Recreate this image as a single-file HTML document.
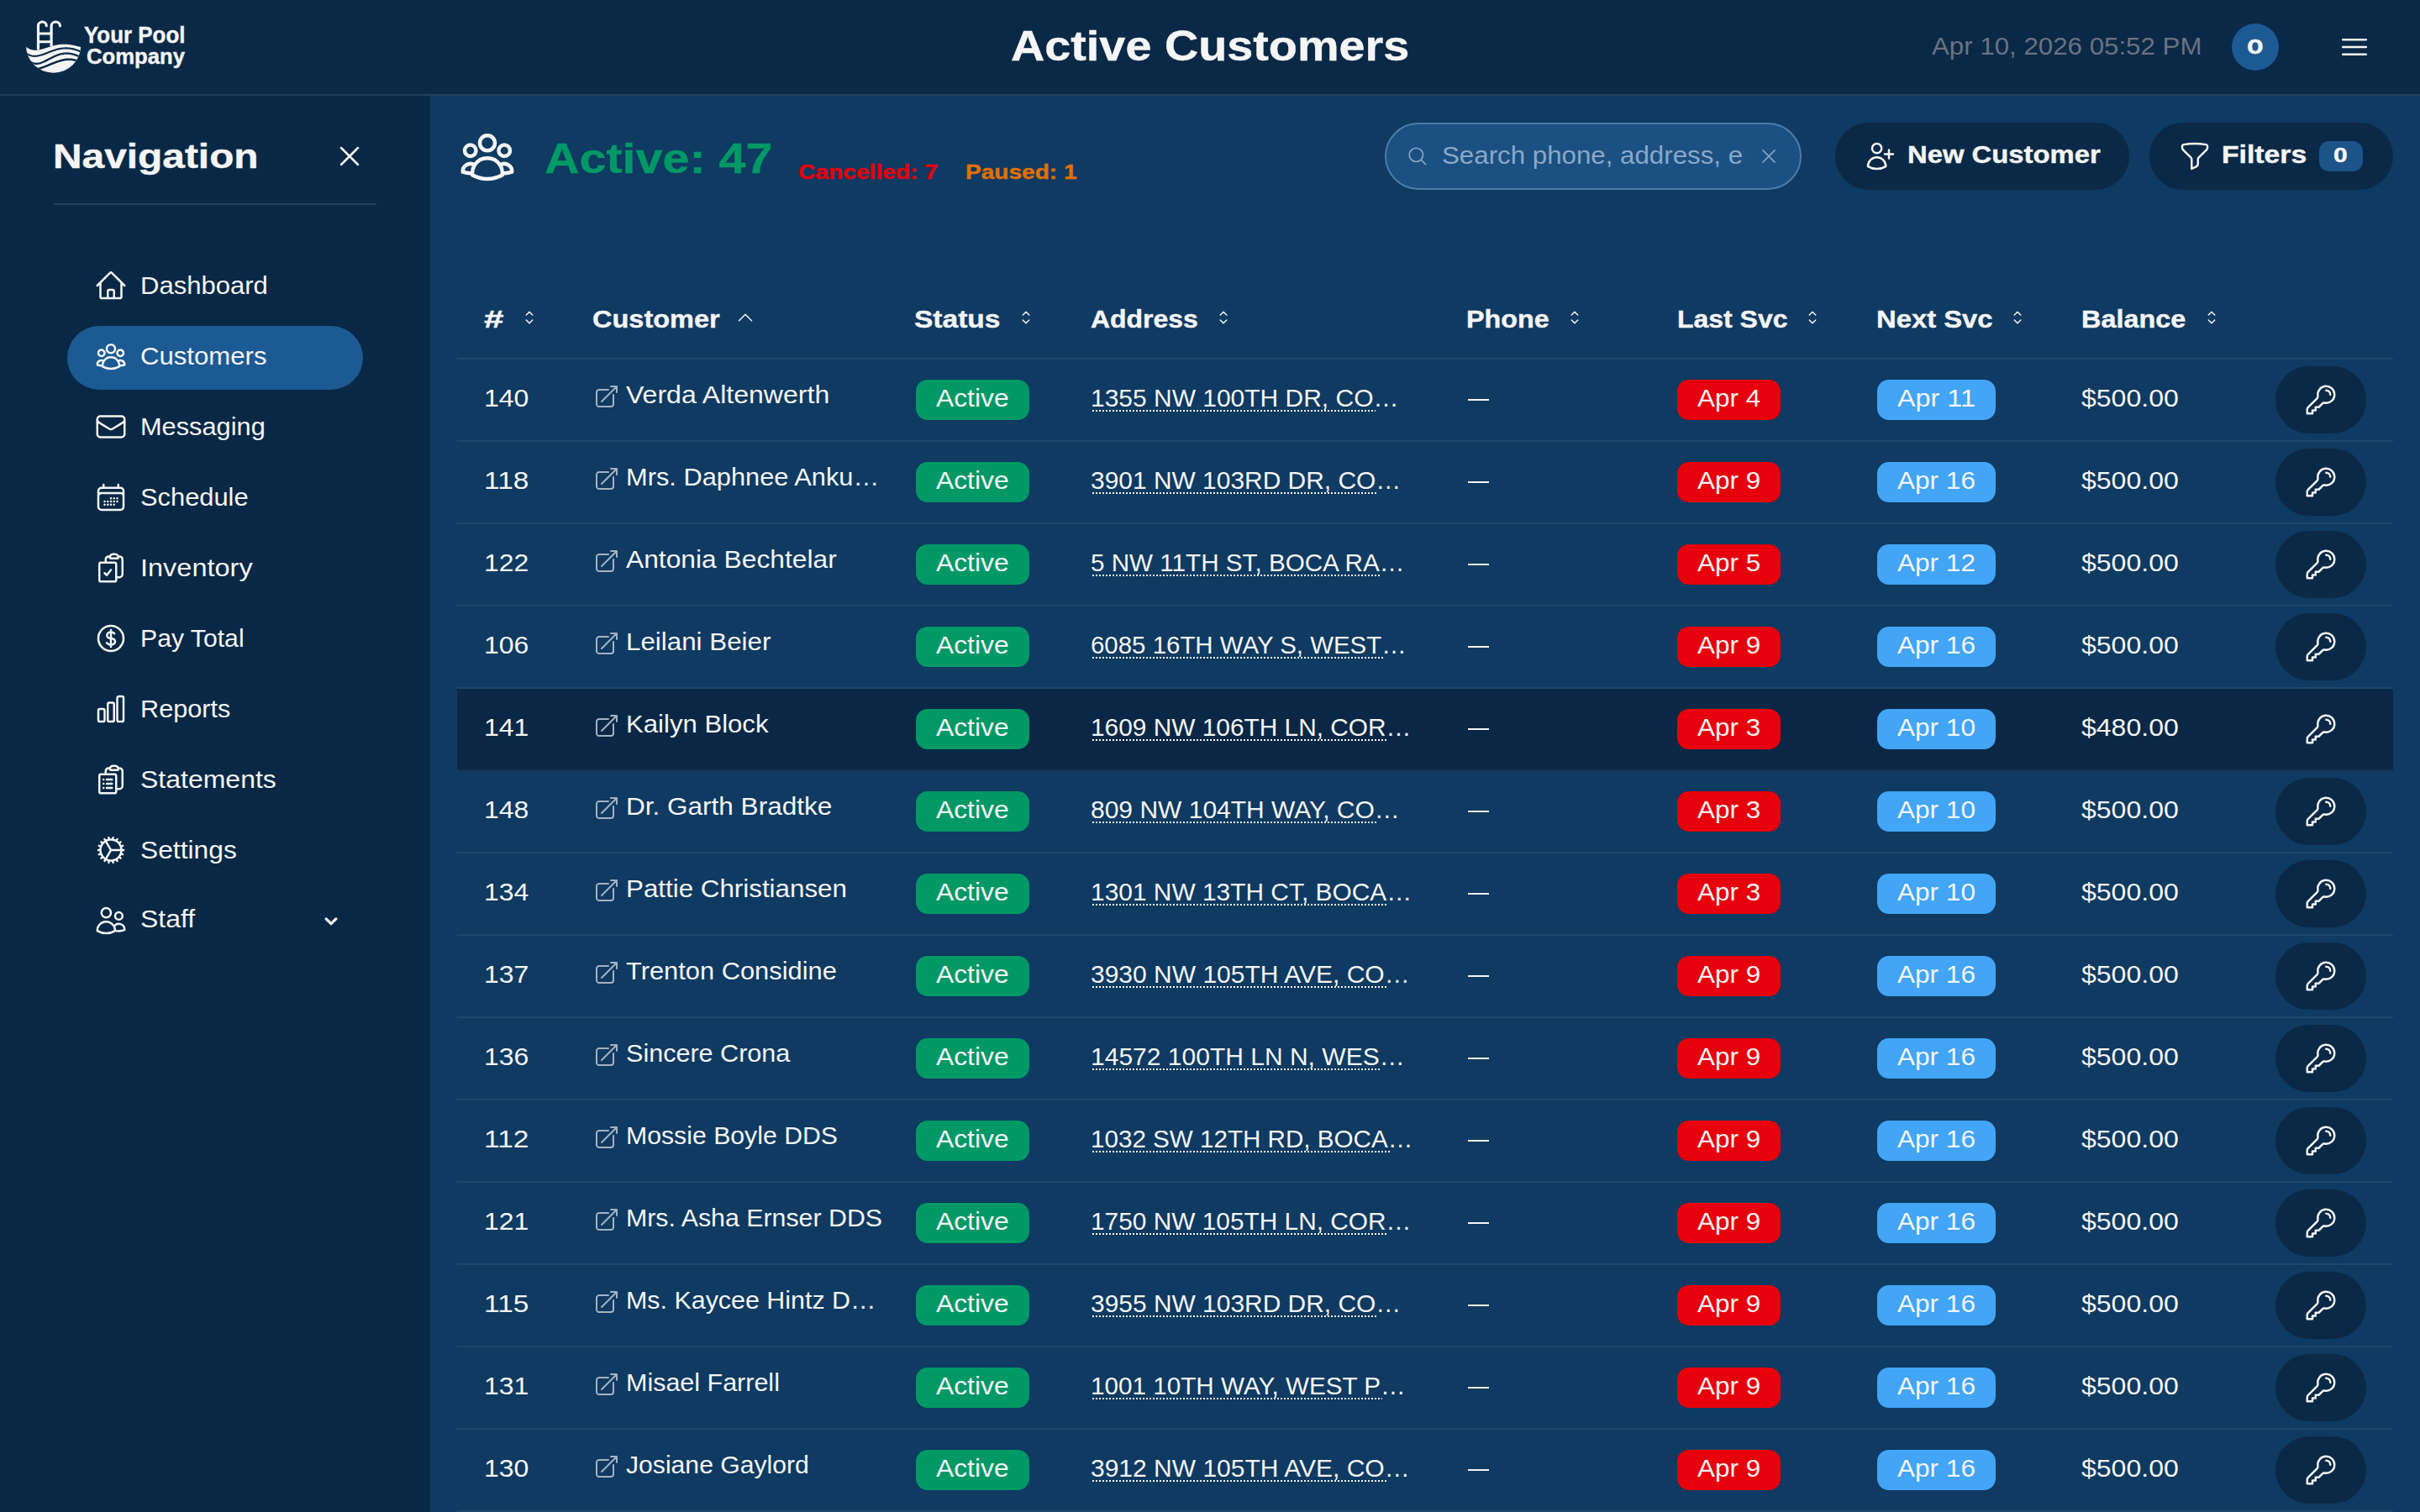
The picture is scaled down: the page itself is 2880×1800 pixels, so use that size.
<!DOCTYPE html><html><head><meta charset="utf-8"><title>Active Customers</title><style>
html,body{margin:0;padding:0;width:2880px;height:1800px;overflow:hidden;background:#0f3a61}
body{position:relative;font-family:"Liberation Sans",sans-serif}
.b{position:absolute}
.ic{position:absolute;overflow:visible}
.t{position:absolute;white-space:pre;line-height:0;height:0;transform-origin:0 0}
.dots{background:repeating-linear-gradient(90deg,#f5f5f5 0 2px,transparent 2px 4px)}
@media (max-width:2000px){html{zoom:0.5}}
</style></head><body><div class="b" style="left:0px;top:0px;width:2880px;height:112px;background:#0a2946;border-radius:0px;"></div>
<div class="b" style="left:0px;top:112px;width:2880px;height:2px;background:#233f58;border-radius:0px;"></div>
<div class="b" style="left:0px;top:114px;width:512px;height:1686px;background:#082845;border-radius:0px;"></div>
<div class="b" style="left:512px;top:114px;width:2368px;height:1686px;background:#0f3a61;border-radius:0px;"></div>
<svg class="ic" style="left:0;top:0;width:240px;height:112px" viewBox="0 0 240 112"><defs><clipPath id="lc"><circle cx="63.6" cy="54.2" r="32.6"/></clipPath></defs><g clip-path="url(#lc)"><path d="M26.0,50.10 L27.0,51.47 L28.0,52.71 L29.0,53.83 L30.0,54.83 L31.0,55.72 L32.0,56.50 L33.0,57.18 L34.0,57.77 L35.0,58.27 L36.0,58.69 L37.0,59.03 L38.0,59.29 L39.0,59.49 L40.0,59.63 L41.0,59.71 L42.0,59.73 L43.0,59.71 L44.0,59.64 L45.0,59.53 L46.0,59.38 L47.0,59.20 L48.0,58.99 L49.0,58.76 L50.0,58.51 L51.0,58.23 L52.0,57.94 L53.0,57.64 L54.0,57.34 L55.0,57.02 L56.0,56.70 L57.0,56.38 L58.0,56.07 L59.0,55.75 L60.0,55.45 L61.0,55.15 L62.0,54.86 L63.0,54.58 L64.0,54.32 L65.0,54.07 L66.0,53.84 L67.0,53.63 L68.0,53.43 L69.0,53.26 L70.0,53.10 L71.0,52.97 L72.0,52.86 L73.0,52.77 L74.0,52.71 L75.0,52.66 L76.0,52.65 L77.0,52.65 L78.0,52.68 L79.0,52.72 L80.0,52.79 L81.0,52.89 L82.0,53.00 L83.0,53.13 L84.0,53.28 L85.0,53.45 L86.0,53.63 L87.0,53.83 L88.0,54.05 L89.0,54.27 L90.0,54.50 L91.0,54.75 L92.0,54.99 L93.0,55.24 L94.0,55.49 L95.0,55.74 L96.0,55.99 L97.0,56.23 L98.0,56.46 L99.0,56.68 L100.0,56.88 L101.0,57.06 L102.0,57.22 L102,100 L26,100 Z" fill="#f5f5f5"/><polyline points="26.0,57.68 27.0,59.01 28.0,60.22 29.0,61.31 30.0,62.28 31.0,63.14 32.0,63.89 33.0,64.55 34.0,65.11 35.0,65.58 36.0,65.97 37.0,66.28 38.0,66.52 39.0,66.69 40.0,66.79 41.0,66.83 42.0,66.82 43.0,66.76 44.0,66.65 45.0,66.50 46.0,66.30 47.0,66.08 48.0,65.82 49.0,65.53 50.0,65.22 51.0,64.89 52.0,64.54 53.0,64.17 54.0,63.80 55.0,63.42 56.0,63.03 57.0,62.64 58.0,62.24 59.0,61.85 60.0,61.47 61.0,61.09 62.0,60.72 63.0,60.36 64.0,60.02 65.0,59.69 66.0,59.38 67.0,59.08 68.0,58.80 69.0,58.55 70.0,58.31 71.0,58.10 72.0,57.92 73.0,57.76 74.0,57.62 75.0,57.51 76.0,57.43 77.0,57.38 78.0,57.35 79.0,57.35 80.0,57.38 81.0,57.44 82.0,57.52 83.0,57.64 84.0,57.78 85.0,57.95 86.0,58.14 87.0,58.36 88.0,58.60 89.0,58.87 90.0,59.16 91.0,59.47 92.0,59.81 93.0,60.16 94.0,60.53 95.0,60.91 96.0,61.31 97.0,61.72 98.0,62.14 99.0,62.57 100.0,63.00 101.0,63.44 102.0,63.88" fill="none" stroke="#0a2946" stroke-width="2.1"/><polyline points="26.0,57.75 27.0,60.14 28.0,62.32 29.0,64.30 30.0,66.09 31.0,67.69 32.0,69.12 33.0,70.39 34.0,71.50 35.0,72.46 36.0,73.29 37.0,73.98 38.0,74.55 39.0,75.01 40.0,75.35 41.0,75.60 42.0,75.75 43.0,75.82 44.0,75.81 45.0,75.72 46.0,75.57 47.0,75.35 48.0,75.08 49.0,74.76 50.0,74.40 51.0,74.00 52.0,73.57 53.0,73.11 54.0,72.63 55.0,72.13 56.0,71.61 57.0,71.09 58.0,70.56 59.0,70.03 60.0,69.51 61.0,68.98 62.0,68.47 63.0,67.97 64.0,67.49 65.0,67.02 66.0,66.58 67.0,66.16 68.0,65.76 69.0,65.39 70.0,65.05 71.0,64.74 72.0,64.47 73.0,64.22 74.0,64.01 75.0,63.84 76.0,63.71 77.0,63.61 78.0,63.54 79.0,63.52 80.0,63.53 81.0,63.58 82.0,63.67 83.0,63.79 84.0,63.95 85.0,64.14 86.0,64.36 87.0,64.62 88.0,64.90 89.0,65.22 90.0,65.56 91.0,65.92 92.0,66.31 93.0,66.71 94.0,67.14 95.0,67.57 96.0,68.02 97.0,68.47 98.0,68.93 99.0,69.39 100.0,69.84 101.0,70.29 102.0,70.73" fill="none" stroke="#0a2946" stroke-width="2.3"/><polyline points="26.0,80.27 27.0,80.79 28.0,81.25 29.0,81.65 30.0,82.00 31.0,82.29 32.0,82.54 33.0,82.74 34.0,82.89 35.0,82.99 36.0,83.06 37.0,83.08 38.0,83.07 39.0,83.01 40.0,82.93 41.0,82.81 42.0,82.65 43.0,82.47 44.0,82.26 45.0,82.03 46.0,81.77 47.0,81.49 48.0,81.19 49.0,80.87 50.0,80.53 51.0,80.18 52.0,79.81 53.0,79.44 54.0,79.05 55.0,78.65 56.0,78.25 57.0,77.84 58.0,77.43 59.0,77.02 60.0,76.60 61.0,76.19 62.0,75.78 63.0,75.38 64.0,74.98 65.0,74.59 66.0,74.21 67.0,73.85 68.0,73.49 69.0,73.15 70.0,72.82 71.0,72.51 72.0,72.22 73.0,71.96 74.0,71.71 75.0,71.48 76.0,71.28 77.0,71.11 78.0,70.96 79.0,70.85 80.0,70.76 81.0,70.71 82.0,70.69 83.0,70.70 84.0,70.75 85.0,70.84 86.0,70.96 87.0,71.13 88.0,71.34 89.0,71.59 90.0,71.88 91.0,72.22 92.0,72.61 93.0,73.04 94.0,73.53 95.0,74.06 96.0,74.65 97.0,75.29 98.0,75.98 99.0,76.73 100.0,77.54 101.0,78.40 102.0,79.32" fill="none" stroke="#0a2946" stroke-width="2.5"/></g><g fill="none" stroke="#f5f5f5" stroke-width="3.2" stroke-linecap="round"><path d="M45.5,58 V31.2 A4.9,4.9 0 0 1 55.3,30.6" /><path d="M61.1,54 V31.5 A5.2,5.2 0 0 1 71.5,30.9" /></g><path d="M45.5,40 H61.1 M45.5,49.65 H61.1" stroke="#f5f5f5" stroke-width="3" fill="none"/></svg>
<div class="t" style="left:100.00px;top:42.26px;font-size:27.81px;font-weight:700;-webkit-text-stroke:0.4px;color:#f5f5f5;transform:scaleX(0.9322);">Your Pool</div>
<div class="t" style="left:103.00px;top:67.15px;font-size:25.23px;font-weight:700;-webkit-text-stroke:0.4px;color:#f5f5f5;transform:scaleX(1.0175);">Company</div>
<div class="t" style="left:1203.00px;top:54.76px;font-size:49.44px;font-weight:700;-webkit-text-stroke:0.4px;color:#f5f5f5;transform:scaleX(1.1282);">Active Customers</div>
<div class="t" style="left:2299.30px;top:54.50px;font-size:28.84px;color:#6a7282;transform:scaleX(1.0841);">Apr 10, 2026 05:52 PM</div>
<div class="b" style="left:2656px;top:28px;width:56px;height:56px;background:#1c5a93;border-radius:28px;"></div>
<div class="t" style="left:2673.69px;top:53.99px;font-size:30.90px;font-weight:700;-webkit-text-stroke:0.4px;color:#f5f5f5;transform:scaleX(1.0382);">o</div>
<svg class="ic" style="left:2782px;top:36px;width:40px;height:40px;color:#f5f5f5" viewBox="0 0 24 24" fill="none" stroke="currentColor" stroke-width="1.6" stroke-linecap="round" stroke-linejoin="round"><path d="M3.75 6.75h16.5M3.75 12h16.5m-16.5 5.25h16.5"/></svg>
<div class="t" style="left:63.00px;top:186.02px;font-size:41.20px;font-weight:700;-webkit-text-stroke:0.4px;color:#f5f5f5;transform:scaleX(1.1617);">Navigation</div>
<svg class="ic" style="left:396px;top:166px;width:40px;height:40px;color:#f5f5f5" viewBox="0 0 24 24" fill="none" stroke="currentColor" stroke-width="1.5" stroke-linecap="round" stroke-linejoin="round"><path d="M6 18 18 6M6 6l12 12"/></svg>
<div class="b" style="left:64px;top:242px;width:384px;height:2px;background:#1f3f5c;border-radius:0px;"></div>
<div class="b" style="left:80px;top:388px;width:352px;height:76px;background:#1c5a93;border-radius:38px;"></div>
<svg class="ic" style="left:112px;top:319.6px;width:40px;height:40px;color:#f5f5f5" viewBox="0 0 24 24" fill="none" stroke="currentColor" stroke-width="1.5" stroke-linecap="round" stroke-linejoin="round"><path d="m2.25 12 8.954-8.955c.44-.439 1.152-.439 1.591 0L21.75 12M4.5 9.75v10.125c0 .621.504 1.125 1.125 1.125H9.75v-4.875c0-.621.504-1.125 1.125-1.125h2.25c.621 0 1.125.504 1.125 1.125V21h4.125c.621 0 1.125-.504 1.125-1.125V9.75M8.25 21h8.25"/></svg>
<div class="t" style="left:167.00px;top:340.20px;font-size:28.84px;color:#f5f5f5;transform:scaleX(1.0767);">Dashboard</div>
<svg class="ic" style="left:112px;top:403.6px;width:40px;height:40px;color:#f5f5f5" viewBox="0 0 24 24" fill="none" stroke="currentColor" stroke-width="1.5" stroke-linecap="round" stroke-linejoin="round"><path d="M18 18.72a9.094 9.094 0 0 0 3.741-.479 3 3 0 0 0-4.682-2.72m.94 3.198.001.031c0 .225-.012.447-.037.666A11.944 11.944 0 0 1 12 21c-2.17 0-4.207-.576-5.963-1.584A6.062 6.062 0 0 1 6 18.719m12 0a5.971 5.971 0 0 0-.941-3.197m0 0A5.995 5.995 0 0 0 12 12.75a5.995 5.995 0 0 0-5.058 2.772m0 0a3 3 0 0 0-4.681 2.72 8.986 8.986 0 0 0 3.74.477m.94-3.197a5.971 5.971 0 0 0-.94 3.197M15 6.75a3 3 0 1 1-6 0 3 3 0 0 1 6 0Zm6 3a2.25 2.25 0 1 1-4.5 0 2.25 2.25 0 0 1 4.5 0Zm-13.5 0a2.25 2.25 0 1 1-4.5 0 2.25 2.25 0 0 1 4.5 0Z"/></svg>
<div class="t" style="left:167.00px;top:424.20px;font-size:28.84px;color:#f5f5f5;transform:scaleX(1.0801);">Customers</div>
<svg class="ic" style="left:112px;top:487.6px;width:40px;height:40px;color:#f5f5f5" viewBox="0 0 24 24" fill="none" stroke="currentColor" stroke-width="1.5" stroke-linecap="round" stroke-linejoin="round"><path d="M21.75 6.75v10.5a2.25 2.25 0 0 1-2.25 2.25h-15a2.25 2.25 0 0 1-2.25-2.25V6.75m19.5 0A2.25 2.25 0 0 0 19.5 4.5h-15a2.25 2.25 0 0 0-2.25 2.25m19.5 0v.243a2.25 2.25 0 0 1-1.07 1.916l-7.5 4.615a2.25 2.25 0 0 1-2.36 0L3.32 8.91a2.25 2.25 0 0 1-1.07-1.916V6.75"/></svg>
<div class="t" style="left:167.00px;top:508.20px;font-size:28.84px;color:#f5f5f5;transform:scaleX(1.0669);">Messaging</div>
<svg class="ic" style="left:112px;top:571.6px;width:40px;height:40px;color:#f5f5f5" viewBox="0 0 24 24" fill="none" stroke="currentColor" stroke-width="1.5" stroke-linecap="round" stroke-linejoin="round"><path d="M6.75 3v2.25M17.25 3v2.25M3 18.75V7.5a2.25 2.25 0 0 1 2.25-2.25h13.5A2.25 2.25 0 0 1 21 7.5v11.25m-18 0A2.25 2.25 0 0 0 5.25 21h13.5A2.25 2.25 0 0 0 21 18.75m-18 0v-7.5A2.25 2.25 0 0 1 5.25 9h13.5A2.25 2.25 0 0 1 21 11.25v7.5m-9-6h.008v.008H12v-.008ZM12 15h.008v.008H12V15Zm0 2.25h.008v.008H12v-.008ZM9.75 15h.008v.008H9.75V15Zm0 2.25h.008v.008H9.75v-.008ZM7.5 15h.008v.008H7.5V15Zm0 2.25h.008v.008H7.5v-.008Zm6.75-4.5h.008v.008h-.008v-.008Zm0 2.25h.008v.008h-.008V15Zm0 2.25h.008v.008h-.008v-.008Zm2.25-4.5h.008v.008H16.5v-.008Zm0 2.25h.008v.008H16.5V15Z"/></svg>
<div class="t" style="left:167.00px;top:592.20px;font-size:28.84px;color:#f5f5f5;transform:scaleX(1.0699);">Schedule</div>
<svg class="ic" style="left:112px;top:655.6px;width:40px;height:40px;color:#f5f5f5" viewBox="0 0 24 24" fill="none" stroke="currentColor" stroke-width="1.5" stroke-linecap="round" stroke-linejoin="round"><path d="M11.35 3.836c-.065.21-.1.433-.1.664 0 .414.336.75.75.75h4.5a.75.75 0 0 0 .75-.75 2.25 2.25 0 0 0-.1-.664m-5.8 0A2.251 2.251 0 0 1 13.5 2.25H15c1.012 0 1.867.668 2.15 1.586m-5.8 0c-.376.023-.75.05-1.124.08C9.095 4.01 8.25 4.973 8.25 6.108V8.25m8.9-4.414c.376.023.75.05 1.124.08 1.131.094 1.976 1.057 1.976 2.192V16.5A2.25 2.25 0 0 1 18 18.75h-2.25m-7.5-10.5H4.875c-.621 0-1.125.504-1.125 1.125v11.25c0 .621.504 1.125 1.125 1.125h9.75c.621 0 1.125-.504 1.125-1.125V18.75m-7.5-10.5h6.375c.621 0 1.125.504 1.125 1.125v9.375m-8.25-3 1.5 1.5 3-3.75"/></svg>
<div class="t" style="left:167.00px;top:676.20px;font-size:28.84px;color:#f5f5f5;transform:scaleX(1.1275);">Inventory</div>
<svg class="ic" style="left:112px;top:739.6px;width:40px;height:40px;color:#f5f5f5" viewBox="0 0 24 24" fill="none" stroke="currentColor" stroke-width="1.5" stroke-linecap="round" stroke-linejoin="round"><path d="M12 6v12m-3-2.818.879.659c1.171.879 3.07.879 4.242 0 1.172-.879 1.172-2.303 0-3.182C13.536 12.219 12.768 12 12 12c-.725 0-1.45-.22-2.003-.659-1.106-.879-1.106-2.303 0-3.182s2.9-.879 4.006 0l.415.33M21 12a9 9 0 1 1-18 0 9 9 0 0 1 18 0Z"/></svg>
<div class="t" style="left:167.00px;top:760.20px;font-size:28.84px;color:#f5f5f5;transform:scaleX(1.0469);">Pay Total</div>
<svg class="ic" style="left:112px;top:823.6px;width:40px;height:40px;color:#f5f5f5" viewBox="0 0 24 24" fill="none" stroke="currentColor" stroke-width="1.5" stroke-linecap="round" stroke-linejoin="round"><path d="M3 13.125C3 12.504 3.504 12 4.125 12h2.25c.621 0 1.125.504 1.125 1.125v6.75C7.5 20.496 6.996 21 6.375 21h-2.25A1.125 1.125 0 0 1 3 19.875v-6.75ZM9.75 8.625c0-.621.504-1.125 1.125-1.125h2.25c.621 0 1.125.504 1.125 1.125v11.25c0 .621-.504 1.125-1.125 1.125h-2.25a1.125 1.125 0 0 1-1.125-1.125V8.625ZM16.5 4.125c0-.621.504-1.125 1.125-1.125h2.25C20.496 3 21 3.504 21 4.125v15.75c0 .621-.504 1.125-1.125 1.125h-2.25a1.125 1.125 0 0 1-1.125-1.125V4.125Z"/></svg>
<div class="t" style="left:167.00px;top:844.20px;font-size:28.84px;color:#f5f5f5;transform:scaleX(1.0636);">Reports</div>
<svg class="ic" style="left:112px;top:907.6px;width:40px;height:40px;color:#f5f5f5" viewBox="0 0 24 24" fill="none" stroke="currentColor" stroke-width="1.5" stroke-linecap="round" stroke-linejoin="round"><path d="M9 12h3.75M9 15h3.75M9 18h3.75m3 .75H18a2.25 2.25 0 0 0 2.25-2.25V6.108c0-1.135-.845-2.098-1.976-2.192a48.424 48.424 0 0 0-1.123-.08m-5.801 0c-.065.21-.1.433-.1.664 0 .414.336.75.75.75h4.5a.75.75 0 0 0 .75-.75 2.25 2.25 0 0 0-.1-.664m-5.8 0A2.251 2.251 0 0 1 13.5 2.25H15c1.012 0 1.867.668 2.15 1.586m-5.8 0c-.376.023-.75.05-1.124.08C9.095 4.01 8.25 4.973 8.25 6.108V8.25m0 0H4.875c-.621 0-1.125.504-1.125 1.125v11.25c0 .621.504 1.125 1.125 1.125h9.75c.621 0 1.125-.504 1.125-1.125V9.375c0-.621-.504-1.125-1.125-1.125H8.25ZM6.75 12h.008v.008H6.75V12Zm0 3h.008v.008H6.75V15Zm0 3h.008v.008H6.75V18Z"/></svg>
<div class="t" style="left:167.00px;top:928.20px;font-size:28.84px;color:#f5f5f5;transform:scaleX(1.1100);">Statements</div>
<svg class="ic" style="left:112px;top:991.6px;width:40px;height:40px;color:#f5f5f5" viewBox="0 0 24 24" fill="none" stroke="currentColor" stroke-width="1.5" stroke-linecap="round" stroke-linejoin="round"><path d="M4.5 12a7.5 7.5 0 0 0 15 0m-15 0a7.5 7.5 0 1 1 15 0m-15 0H3m16.5 0H21m-1.5 0H12m-8.457 3.077 1.41-.513m14.095-5.13 1.41-.513M5.106 17.785l1.15-.964m11.49-9.642 1.149-.964M7.501 19.795l.75-1.3m7.5-12.99.75-1.3m-6.063 16.658.26-1.477m2.605-14.772.26-1.477m0 17.726-.26-1.477M10.698 4.614l-.26-1.477M16.5 19.794l-.75-1.299M7.5 4.205 12 12m6.894 5.785-1.149-.964M6.256 7.178l-1.15-.964m15.352 8.864-1.41-.513M4.954 9.435l-1.41-.514M12.002 12l-3.75 6.495"/></svg>
<div class="t" style="left:167.00px;top:1012.20px;font-size:28.84px;color:#f5f5f5;transform:scaleX(1.1021);">Settings</div>
<svg class="ic" style="left:112px;top:1075.9px;width:40px;height:40px;color:#f5f5f5" viewBox="0 0 24 24" fill="none" stroke="currentColor" stroke-width="1.5" stroke-linecap="round" stroke-linejoin="round"><path d="M15 19.128a9.38 9.38 0 0 0 2.625.372 9.337 9.337 0 0 0 4.121-.952 4.125 4.125 0 0 0-7.533-2.493M15 19.128v-.003c0-1.113-.285-2.16-.786-3.07M15 19.128v.106A12.318 12.318 0 0 1 8.624 21c-2.331 0-4.512-.645-6.374-1.766l-.001-.109a6.375 6.375 0 0 1 11.964-3.07M12 6.375a3.375 3.375 0 1 1-6.75 0 3.375 3.375 0 0 1 6.75 0Zm8.25 2.25a2.625 2.625 0 1 1-5.25 0 2.625 2.625 0 0 1 5.25 0Z"/></svg>
<div class="t" style="left:167.00px;top:1093.50px;font-size:28.84px;color:#f5f5f5;transform:scaleX(1.1088);">Staff</div>
<svg class="ic" style="left:383px;top:1085.6px;width:22px;height:22px;color:#f5f5f5" viewBox="0 0 24 24" fill="none" stroke="currentColor" stroke-width="3.6" stroke-linecap="round" stroke-linejoin="round"><path d="M5.6 8.6 12 14.9 18.4 8.6"/></svg>
<svg class="ic" style="left:544px;top:150px;width:72px;height:72px;color:#f5f5f5" viewBox="0 0 24 24" fill="none" stroke="currentColor" stroke-width="1.5" stroke-linecap="round" stroke-linejoin="round"><path d="M18 18.72a9.094 9.094 0 0 0 3.741-.479 3 3 0 0 0-4.682-2.72m.94 3.198.001.031c0 .225-.012.447-.037.666A11.944 11.944 0 0 1 12 21c-2.17 0-4.207-.576-5.963-1.584A6.062 6.062 0 0 1 6 18.719m12 0a5.971 5.971 0 0 0-.941-3.197m0 0A5.995 5.995 0 0 0 12 12.75a5.995 5.995 0 0 0-5.058 2.772m0 0a3 3 0 0 0-4.681 2.72 8.986 8.986 0 0 0 3.74.477m.94-3.197a5.971 5.971 0 0 0-.94 3.197M15 6.75a3 3 0 1 1-6 0 3 3 0 0 1 6 0Zm6 3a2.25 2.25 0 1 1-4.5 0 2.25 2.25 0 0 1 4.5 0Zm-13.5 0a2.25 2.25 0 1 1-4.5 0 2.25 2.25 0 0 1 4.5 0Z"/></svg>
<div class="t" style="left:648.30px;top:188.96px;font-size:49.44px;font-weight:700;-webkit-text-stroke:0.4px;color:#009966;transform:scaleX(1.1625);">Active: 47</div>
<div class="t" style="left:950.20px;top:205.23px;font-size:24.72px;font-weight:700;-webkit-text-stroke:0.4px;color:#e7000b;transform:scaleX(1.1396);">Cancelled: 7</div>
<div class="t" style="left:1149.20px;top:205.23px;font-size:24.72px;font-weight:700;-webkit-text-stroke:0.4px;color:#e17100;transform:scaleX(1.1356);">Paused: 1</div>
<div class="b" style="left:1648px;top:146px;width:496px;height:80px;background:#1b5082;border-radius:40px;box-sizing:border-box;border:2px solid #4f7ca6;"></div>
<svg class="ic" style="left:1674px;top:173px;width:26px;height:26px;color:#8ba8c6" viewBox="0 0 24 24" fill="none" stroke="currentColor" stroke-width="1.5" stroke-linecap="round" stroke-linejoin="round"><path d="m21 21-5.197-5.197m0 0A7.5 7.5 0 1 0 5.196 5.196a7.5 7.5 0 0 0 10.607 10.607Z"/></svg>
<div class="b" style="left:1712px;top:150px;width:364px;height:72px;overflow:hidden">
<div class="t" style="left:3.50px;top:34.70px;font-size:28.84px;color:#8ba8c6;transform:scaleX(1.0845);">Search phone, address, email</div>
</div>
<svg class="ic" style="left:2090.6px;top:172.4px;width:28px;height:28px;color:#8ba8c6" viewBox="0 0 24 24" fill="none" stroke="currentColor" stroke-width="1.5" stroke-linecap="round" stroke-linejoin="round"><path d="M6 18 18 6M6 6l12 12"/></svg>
<div class="b" style="left:2184px;top:146px;width:350px;height:80px;background:#0a2946;border-radius:40px;"></div>
<svg class="ic" style="left:2218px;top:166px;width:40px;height:40px;color:#f5f5f5" viewBox="0 0 24 24" fill="none" stroke="currentColor" stroke-width="1.5" stroke-linecap="round" stroke-linejoin="round"><path d="M18 7.5v3m0 0v3m0-3h3m-3 0h-3m-2.25-4.125a3.375 3.375 0 1 1-6.75 0 3.375 3.375 0 0 1 6.75 0ZM3 19.235v-.11a6.375 6.375 0 0 1 12.75 0v.109A12.318 12.318 0 0 1 9.374 21c-2.331 0-4.512-.645-6.374-1.766Z"/></svg>
<div class="t" style="left:2270.30px;top:184.40px;font-size:28.84px;font-weight:700;-webkit-text-stroke:0.4px;color:#f5f5f5;transform:scaleX(1.1380);">New Customer</div>
<div class="b" style="left:2558px;top:146px;width:290px;height:80px;background:#0a2946;border-radius:40px;"></div>
<svg class="ic" style="left:2592px;top:166px;width:40px;height:40px;color:#f5f5f5" viewBox="0 0 24 24" fill="none" stroke="currentColor" stroke-width="1.5" stroke-linecap="round" stroke-linejoin="round"><path d="M12 3c2.755 0 5.455.232 8.083.678.533.09.917.556.917 1.096v1.044a2.25 2.25 0 0 1-.659 1.591l-5.432 5.432a2.25 2.25 0 0 0-.659 1.591v2.927a2.25 2.25 0 0 1-1.244 2.013L9.75 21v-6.568a2.25 2.25 0 0 0-.659-1.591L3.659 7.409A2.25 2.25 0 0 1 3 5.818V4.774c0-.54.384-1.006.917-1.096A48.32 48.32 0 0 1 12 3Z"/></svg>
<div class="t" style="left:2644.00px;top:184.40px;font-size:28.84px;font-weight:700;-webkit-text-stroke:0.4px;color:#f5f5f5;transform:scaleX(1.1689);">Filters</div>
<div class="b" style="left:2760px;top:168px;width:52px;height:36px;background:#1c5488;border-radius:12px;"></div>
<div class="t" style="left:2776.90px;top:185.23px;font-size:24.72px;font-weight:700;-webkit-text-stroke:0.4px;color:#f5f5f5;transform:scaleX(1.2139);">0</div>
<div class="t" style="left:576.00px;top:379.50px;font-size:28.84px;font-weight:700;-webkit-text-stroke:0.4px;color:#f5f5f5;transform:scaleX(1.4626);">#</div>
<svg class="ic" style="left:617.5px;top:366px;width:24px;height:24px;color:#f5f5f5" viewBox="0 0 24 24" fill="none" stroke="currentColor" stroke-width="1.5" stroke-linecap="round" stroke-linejoin="round"><path d="M8.25 15 12 18.75 15.75 15m-7.5-6L12 5.25 15.75 9"/></svg>
<div class="t" style="left:705.00px;top:379.50px;font-size:28.84px;font-weight:700;-webkit-text-stroke:0.4px;color:#f5f5f5;transform:scaleX(1.1272);">Customer</div>
<svg class="ic" style="left:874.8px;top:366px;width:24px;height:24px;color:#f5f5f5" viewBox="0 0 24 24" fill="none" stroke="currentColor" stroke-width="1.5" stroke-linecap="round" stroke-linejoin="round"><path d="m4.5 15.75 7.5-7.5 7.5 7.5"/></svg>
<div class="t" style="left:1088.20px;top:379.50px;font-size:28.84px;font-weight:700;-webkit-text-stroke:0.4px;color:#f5f5f5;transform:scaleX(1.1621);">Status</div>
<svg class="ic" style="left:1208.6px;top:366px;width:24px;height:24px;color:#f5f5f5" viewBox="0 0 24 24" fill="none" stroke="currentColor" stroke-width="1.5" stroke-linecap="round" stroke-linejoin="round"><path d="M8.25 15 12 18.75 15.75 15m-7.5-6L12 5.25 15.75 9"/></svg>
<div class="t" style="left:1298.20px;top:379.50px;font-size:28.84px;font-weight:700;-webkit-text-stroke:0.4px;color:#f5f5f5;transform:scaleX(1.1082);">Address</div>
<svg class="ic" style="left:1444.1px;top:366px;width:24px;height:24px;color:#f5f5f5" viewBox="0 0 24 24" fill="none" stroke="currentColor" stroke-width="1.5" stroke-linecap="round" stroke-linejoin="round"><path d="M8.25 15 12 18.75 15.75 15m-7.5-6L12 5.25 15.75 9"/></svg>
<div class="t" style="left:1745.40px;top:379.50px;font-size:28.84px;font-weight:700;-webkit-text-stroke:0.4px;color:#f5f5f5;transform:scaleX(1.1191);">Phone</div>
<svg class="ic" style="left:1862.0px;top:366px;width:24px;height:24px;color:#f5f5f5" viewBox="0 0 24 24" fill="none" stroke="currentColor" stroke-width="1.5" stroke-linecap="round" stroke-linejoin="round"><path d="M8.25 15 12 18.75 15.75 15m-7.5-6L12 5.25 15.75 9"/></svg>
<div class="t" style="left:1995.80px;top:379.50px;font-size:28.84px;font-weight:700;-webkit-text-stroke:0.4px;color:#f5f5f5;transform:scaleX(1.1090);">Last Svc</div>
<svg class="ic" style="left:2145.4px;top:366px;width:24px;height:24px;color:#f5f5f5" viewBox="0 0 24 24" fill="none" stroke="currentColor" stroke-width="1.5" stroke-linecap="round" stroke-linejoin="round"><path d="M8.25 15 12 18.75 15.75 15m-7.5-6L12 5.25 15.75 9"/></svg>
<div class="t" style="left:2232.70px;top:379.50px;font-size:28.84px;font-weight:700;-webkit-text-stroke:0.4px;color:#f5f5f5;transform:scaleX(1.1378);">Next Svc</div>
<svg class="ic" style="left:2389.3px;top:366px;width:24px;height:24px;color:#f5f5f5" viewBox="0 0 24 24" fill="none" stroke="currentColor" stroke-width="1.5" stroke-linecap="round" stroke-linejoin="round"><path d="M8.25 15 12 18.75 15.75 15m-7.5-6L12 5.25 15.75 9"/></svg>
<div class="t" style="left:2477.30px;top:379.50px;font-size:28.84px;font-weight:700;-webkit-text-stroke:0.4px;color:#f5f5f5;transform:scaleX(1.1231);">Balance</div>
<svg class="ic" style="left:2619.6px;top:366px;width:24px;height:24px;color:#f5f5f5" viewBox="0 0 24 24" fill="none" stroke="currentColor" stroke-width="1.5" stroke-linecap="round" stroke-linejoin="round"><path d="M8.25 15 12 18.75 15.75 15m-7.5-6L12 5.25 15.75 9"/></svg>
<div class="b" style="left:544px;top:426px;width:2304px;height:2px;background:#1c486c;border-radius:0px;"></div>
<div class="b" style="left:544px;top:524px;width:2304px;height:2px;background:#1c486c;border-radius:0px;"></div>
<div class="t" style="left:576.00px;top:473.90px;font-size:28.84px;color:#f5f5f5;transform:scaleX(1.1108);">140</div>
<svg class="ic" style="left:706px;top:456px;width:32px;height:32px;color:#a3b3c3" viewBox="0 0 24 24" fill="none" stroke="currentColor" stroke-width="1.5" stroke-linecap="round" stroke-linejoin="round"><path d="M13.5 6H5.25A2.25 2.25 0 0 0 3 8.25v10.5A2.25 2.25 0 0 0 5.25 21h10.5A2.25 2.25 0 0 0 18 18.75V10.5m-10.5 6L21 3m0 0h-5.25M21 3v5.25"/></svg>
<div class="t" style="left:745.00px;top:469.90px;font-size:28.84px;color:#f5f5f5;transform:scaleX(1.1112);">Verda Altenwerth</div>
<div class="b" style="left:1090.0px;top:452px;width:134.6px;height:48px;background:#009966;border-radius:14px"></div>
<div class="t" style="left:1114.00px;top:473.90px;font-size:28.84px;color:#f5f5f5;transform:scaleX(1.1030);">Active</div>
<div class="b dots" style="left:1300px;top:488px;width:336.6px;height:2px"></div>
<div class="t" style="left:1297.50px;top:473.90px;font-size:28.84px;color:#f5f5f5;transform:scaleX(1.0397);">1355 NW 100TH DR, CO…</div>
<div class="b" style="left:1746.5px;top:474.6px;width:25.6px;height:2.6px;background:#f5f5f5;border-radius:0px;"></div>
<div class="b" style="left:1996.0px;top:452px;width:123.2px;height:48px;background:#e7000b;border-radius:14px"></div>
<div class="t" style="left:2020.00px;top:473.90px;font-size:28.84px;color:#f5f5f5;transform:scaleX(1.0901);">Apr 4</div>
<div class="b" style="left:2234.0px;top:452px;width:141.0px;height:48px;background:#42a5f5;border-radius:14px"></div>
<div class="t" style="left:2258.00px;top:473.90px;font-size:28.84px;color:#f5f5f5;transform:scaleX(1.1223);">Apr 11</div>
<div class="t" style="left:2477.00px;top:473.90px;font-size:28.84px;color:#f5f5f5;transform:scaleX(1.1107);">$500.00</div>
<div class="b" style="left:2708px;top:436px;width:108px;height:80px;background:#0a2946;border-radius:40px;"></div>
<svg class="ic" style="left:2742px;top:456px;width:40px;height:40px;color:#f5f5f5" viewBox="0 0 24 24" fill="none" stroke="currentColor" stroke-width="1.5" stroke-linecap="round" stroke-linejoin="round"><path d="M15.75 5.25a3 3 0 0 1 3 3m3 0a6 6 0 0 1-7.029 5.912c-.563-.097-1.159.026-1.563.43L10.5 17.25H8.25v2.25H6v2.25H2.25v-2.818c0-.597.237-1.17.659-1.591l6.499-6.499c.404-.404.527-1 .43-1.563A6 6 0 1 1 21.75 8.25Z"/></svg>
<div class="b" style="left:544px;top:622px;width:2304px;height:2px;background:#1c486c;border-radius:0px;"></div>
<div class="t" style="left:576.00px;top:571.90px;font-size:28.84px;color:#f5f5f5;transform:scaleX(1.1625);">118</div>
<svg class="ic" style="left:706px;top:554px;width:32px;height:32px;color:#a3b3c3" viewBox="0 0 24 24" fill="none" stroke="currentColor" stroke-width="1.5" stroke-linecap="round" stroke-linejoin="round"><path d="M13.5 6H5.25A2.25 2.25 0 0 0 3 8.25v10.5A2.25 2.25 0 0 0 5.25 21h10.5A2.25 2.25 0 0 0 18 18.75V10.5m-10.5 6L21 3m0 0h-5.25M21 3v5.25"/></svg>
<div class="t" style="left:745.00px;top:567.90px;font-size:28.84px;color:#f5f5f5;transform:scaleX(1.0683);">Mrs. Daphnee Anku…</div>
<div class="b" style="left:1090.0px;top:550px;width:134.6px;height:48px;background:#009966;border-radius:14px"></div>
<div class="t" style="left:1114.00px;top:571.90px;font-size:28.84px;color:#f5f5f5;transform:scaleX(1.1030);">Active</div>
<div class="b dots" style="left:1300px;top:586px;width:339.5px;height:2px"></div>
<div class="t" style="left:1297.50px;top:571.90px;font-size:28.84px;color:#f5f5f5;transform:scaleX(1.0384);">3901 NW 103RD DR, CO…</div>
<div class="b" style="left:1746.5px;top:572.6px;width:25.6px;height:2.6px;background:#f5f5f5;border-radius:0px;"></div>
<div class="b" style="left:1996.0px;top:550px;width:123.2px;height:48px;background:#e7000b;border-radius:14px"></div>
<div class="t" style="left:2020.00px;top:571.90px;font-size:28.84px;color:#f5f5f5;transform:scaleX(1.0901);">Apr 9</div>
<div class="b" style="left:2234.0px;top:550px;width:141.0px;height:48px;background:#42a5f5;border-radius:14px"></div>
<div class="t" style="left:2258.00px;top:571.90px;font-size:28.84px;color:#f5f5f5;transform:scaleX(1.0941);">Apr 16</div>
<div class="t" style="left:2477.00px;top:571.90px;font-size:28.84px;color:#f5f5f5;transform:scaleX(1.1107);">$500.00</div>
<div class="b" style="left:2708px;top:534px;width:108px;height:80px;background:#0a2946;border-radius:40px;"></div>
<svg class="ic" style="left:2742px;top:554px;width:40px;height:40px;color:#f5f5f5" viewBox="0 0 24 24" fill="none" stroke="currentColor" stroke-width="1.5" stroke-linecap="round" stroke-linejoin="round"><path d="M15.75 5.25a3 3 0 0 1 3 3m3 0a6 6 0 0 1-7.029 5.912c-.563-.097-1.159.026-1.563.43L10.5 17.25H8.25v2.25H6v2.25H2.25v-2.818c0-.597.237-1.17.659-1.591l6.499-6.499c.404-.404.527-1 .43-1.563A6 6 0 1 1 21.75 8.25Z"/></svg>
<div class="b" style="left:544px;top:720px;width:2304px;height:2px;background:#1c486c;border-radius:0px;"></div>
<div class="t" style="left:576.00px;top:669.90px;font-size:28.84px;color:#f5f5f5;transform:scaleX(1.1108);">122</div>
<svg class="ic" style="left:706px;top:652px;width:32px;height:32px;color:#a3b3c3" viewBox="0 0 24 24" fill="none" stroke="currentColor" stroke-width="1.5" stroke-linecap="round" stroke-linejoin="round"><path d="M13.5 6H5.25A2.25 2.25 0 0 0 3 8.25v10.5A2.25 2.25 0 0 0 5.25 21h10.5A2.25 2.25 0 0 0 18 18.75V10.5m-10.5 6L21 3m0 0h-5.25M21 3v5.25"/></svg>
<div class="t" style="left:745.00px;top:665.90px;font-size:28.84px;color:#f5f5f5;transform:scaleX(1.1017);">Antonia Bechtelar</div>
<div class="b" style="left:1090.0px;top:648px;width:134.6px;height:48px;background:#009966;border-radius:14px"></div>
<div class="t" style="left:1114.00px;top:669.90px;font-size:28.84px;color:#f5f5f5;transform:scaleX(1.1030);">Active</div>
<div class="b dots" style="left:1300px;top:684px;width:343.5px;height:2px"></div>
<div class="t" style="left:1297.50px;top:669.90px;font-size:28.84px;color:#f5f5f5;transform:scaleX(1.0281);">5 NW 11TH ST, BOCA RA…</div>
<div class="b" style="left:1746.5px;top:670.6px;width:25.6px;height:2.6px;background:#f5f5f5;border-radius:0px;"></div>
<div class="b" style="left:1996.0px;top:648px;width:123.2px;height:48px;background:#e7000b;border-radius:14px"></div>
<div class="t" style="left:2020.00px;top:669.90px;font-size:28.84px;color:#f5f5f5;transform:scaleX(1.0901);">Apr 5</div>
<div class="b" style="left:2234.0px;top:648px;width:141.0px;height:48px;background:#42a5f5;border-radius:14px"></div>
<div class="t" style="left:2258.00px;top:669.90px;font-size:28.84px;color:#f5f5f5;transform:scaleX(1.0941);">Apr 12</div>
<div class="t" style="left:2477.00px;top:669.90px;font-size:28.84px;color:#f5f5f5;transform:scaleX(1.1107);">$500.00</div>
<div class="b" style="left:2708px;top:632px;width:108px;height:80px;background:#0a2946;border-radius:40px;"></div>
<svg class="ic" style="left:2742px;top:652px;width:40px;height:40px;color:#f5f5f5" viewBox="0 0 24 24" fill="none" stroke="currentColor" stroke-width="1.5" stroke-linecap="round" stroke-linejoin="round"><path d="M15.75 5.25a3 3 0 0 1 3 3m3 0a6 6 0 0 1-7.029 5.912c-.563-.097-1.159.026-1.563.43L10.5 17.25H8.25v2.25H6v2.25H2.25v-2.818c0-.597.237-1.17.659-1.591l6.499-6.499c.404-.404.527-1 .43-1.563A6 6 0 1 1 21.75 8.25Z"/></svg>
<div class="b" style="left:544px;top:818px;width:2304px;height:2px;background:#1c486c;border-radius:0px;"></div>
<div class="t" style="left:576.00px;top:767.90px;font-size:28.84px;color:#f5f5f5;transform:scaleX(1.1108);">106</div>
<svg class="ic" style="left:706px;top:750px;width:32px;height:32px;color:#a3b3c3" viewBox="0 0 24 24" fill="none" stroke="currentColor" stroke-width="1.5" stroke-linecap="round" stroke-linejoin="round"><path d="M13.5 6H5.25A2.25 2.25 0 0 0 3 8.25v10.5A2.25 2.25 0 0 0 5.25 21h10.5A2.25 2.25 0 0 0 18 18.75V10.5m-10.5 6L21 3m0 0h-5.25M21 3v5.25"/></svg>
<div class="t" style="left:745.00px;top:763.90px;font-size:28.84px;color:#f5f5f5;transform:scaleX(1.0863);">Leilani Beier</div>
<div class="b" style="left:1090.0px;top:746px;width:134.6px;height:48px;background:#009966;border-radius:14px"></div>
<div class="t" style="left:1114.00px;top:767.90px;font-size:28.84px;color:#f5f5f5;transform:scaleX(1.1030);">Active</div>
<div class="b dots" style="left:1300px;top:782px;width:345.8px;height:2px"></div>
<div class="t" style="left:1297.50px;top:767.90px;font-size:28.84px;color:#f5f5f5;transform:scaleX(1.0210);">6085 16TH WAY S, WEST…</div>
<div class="b" style="left:1746.5px;top:768.6px;width:25.6px;height:2.6px;background:#f5f5f5;border-radius:0px;"></div>
<div class="b" style="left:1996.0px;top:746px;width:123.2px;height:48px;background:#e7000b;border-radius:14px"></div>
<div class="t" style="left:2020.00px;top:767.90px;font-size:28.84px;color:#f5f5f5;transform:scaleX(1.0901);">Apr 9</div>
<div class="b" style="left:2234.0px;top:746px;width:141.0px;height:48px;background:#42a5f5;border-radius:14px"></div>
<div class="t" style="left:2258.00px;top:767.90px;font-size:28.84px;color:#f5f5f5;transform:scaleX(1.0941);">Apr 16</div>
<div class="t" style="left:2477.00px;top:767.90px;font-size:28.84px;color:#f5f5f5;transform:scaleX(1.1107);">$500.00</div>
<div class="b" style="left:2708px;top:730px;width:108px;height:80px;background:#0a2946;border-radius:40px;"></div>
<svg class="ic" style="left:2742px;top:750px;width:40px;height:40px;color:#f5f5f5" viewBox="0 0 24 24" fill="none" stroke="currentColor" stroke-width="1.5" stroke-linecap="round" stroke-linejoin="round"><path d="M15.75 5.25a3 3 0 0 1 3 3m3 0a6 6 0 0 1-7.029 5.912c-.563-.097-1.159.026-1.563.43L10.5 17.25H8.25v2.25H6v2.25H2.25v-2.818c0-.597.237-1.17.659-1.591l6.499-6.499c.404-.404.527-1 .43-1.563A6 6 0 1 1 21.75 8.25Z"/></svg>
<div class="b" style="left:544px;top:820px;width:2304px;height:96px;background:#0a2846;border-radius:0px;"></div>
<div class="b" style="left:544px;top:916px;width:2304px;height:2px;background:#183350;border-radius:0px;"></div>
<div class="t" style="left:576.00px;top:865.90px;font-size:28.84px;color:#f5f5f5;transform:scaleX(1.1108);">141</div>
<svg class="ic" style="left:706px;top:848px;width:32px;height:32px;color:#a3b3c3" viewBox="0 0 24 24" fill="none" stroke="currentColor" stroke-width="1.5" stroke-linecap="round" stroke-linejoin="round"><path d="M13.5 6H5.25A2.25 2.25 0 0 0 3 8.25v10.5A2.25 2.25 0 0 0 5.25 21h10.5A2.25 2.25 0 0 0 18 18.75V10.5m-10.5 6L21 3m0 0h-5.25M21 3v5.25"/></svg>
<div class="t" style="left:745.00px;top:861.90px;font-size:28.84px;color:#f5f5f5;transform:scaleX(1.0792);">Kailyn Block</div>
<div class="b" style="left:1090.0px;top:844px;width:134.6px;height:48px;background:#009966;border-radius:14px"></div>
<div class="t" style="left:1114.00px;top:865.90px;font-size:28.84px;color:#f5f5f5;transform:scaleX(1.1030);">Active</div>
<div class="b dots" style="left:1300px;top:880px;width:351.6px;height:2px"></div>
<div class="t" style="left:1297.50px;top:865.90px;font-size:28.84px;color:#f5f5f5;transform:scaleX(1.0352);">1609 NW 106TH LN, COR…</div>
<div class="b" style="left:1746.5px;top:866.6px;width:25.6px;height:2.6px;background:#f5f5f5;border-radius:0px;"></div>
<div class="b" style="left:1996.0px;top:844px;width:123.2px;height:48px;background:#e7000b;border-radius:14px"></div>
<div class="t" style="left:2020.00px;top:865.90px;font-size:28.84px;color:#f5f5f5;transform:scaleX(1.0901);">Apr 3</div>
<div class="b" style="left:2234.0px;top:844px;width:141.0px;height:48px;background:#42a5f5;border-radius:14px"></div>
<div class="t" style="left:2258.00px;top:865.90px;font-size:28.84px;color:#f5f5f5;transform:scaleX(1.0941);">Apr 10</div>
<div class="t" style="left:2477.00px;top:865.90px;font-size:28.84px;color:#f5f5f5;transform:scaleX(1.1107);">$480.00</div>
<svg class="ic" style="left:2742px;top:848px;width:40px;height:40px;color:#f5f5f5" viewBox="0 0 24 24" fill="none" stroke="currentColor" stroke-width="1.5" stroke-linecap="round" stroke-linejoin="round"><path d="M15.75 5.25a3 3 0 0 1 3 3m3 0a6 6 0 0 1-7.029 5.912c-.563-.097-1.159.026-1.563.43L10.5 17.25H8.25v2.25H6v2.25H2.25v-2.818c0-.597.237-1.17.659-1.591l6.499-6.499c.404-.404.527-1 .43-1.563A6 6 0 1 1 21.75 8.25Z"/></svg>
<div class="b" style="left:544px;top:1014px;width:2304px;height:2px;background:#1c486c;border-radius:0px;"></div>
<div class="t" style="left:576.00px;top:963.90px;font-size:28.84px;color:#f5f5f5;transform:scaleX(1.1108);">148</div>
<svg class="ic" style="left:706px;top:946px;width:32px;height:32px;color:#a3b3c3" viewBox="0 0 24 24" fill="none" stroke="currentColor" stroke-width="1.5" stroke-linecap="round" stroke-linejoin="round"><path d="M13.5 6H5.25A2.25 2.25 0 0 0 3 8.25v10.5A2.25 2.25 0 0 0 5.25 21h10.5A2.25 2.25 0 0 0 18 18.75V10.5m-10.5 6L21 3m0 0h-5.25M21 3v5.25"/></svg>
<div class="t" style="left:745.00px;top:959.90px;font-size:28.84px;color:#f5f5f5;transform:scaleX(1.0934);">Dr. Garth Bradtke</div>
<div class="b" style="left:1090.0px;top:942px;width:134.6px;height:48px;background:#009966;border-radius:14px"></div>
<div class="t" style="left:1114.00px;top:963.90px;font-size:28.84px;color:#f5f5f5;transform:scaleX(1.1030);">Active</div>
<div class="b dots" style="left:1300px;top:978px;width:338.0px;height:2px"></div>
<div class="t" style="left:1297.50px;top:963.90px;font-size:28.84px;color:#f5f5f5;transform:scaleX(1.0406);">809 NW 104TH WAY, CO…</div>
<div class="b" style="left:1746.5px;top:964.6px;width:25.6px;height:2.6px;background:#f5f5f5;border-radius:0px;"></div>
<div class="b" style="left:1996.0px;top:942px;width:123.2px;height:48px;background:#e7000b;border-radius:14px"></div>
<div class="t" style="left:2020.00px;top:963.90px;font-size:28.84px;color:#f5f5f5;transform:scaleX(1.0901);">Apr 3</div>
<div class="b" style="left:2234.0px;top:942px;width:141.0px;height:48px;background:#42a5f5;border-radius:14px"></div>
<div class="t" style="left:2258.00px;top:963.90px;font-size:28.84px;color:#f5f5f5;transform:scaleX(1.0941);">Apr 10</div>
<div class="t" style="left:2477.00px;top:963.90px;font-size:28.84px;color:#f5f5f5;transform:scaleX(1.1107);">$500.00</div>
<div class="b" style="left:2708px;top:926px;width:108px;height:80px;background:#0a2946;border-radius:40px;"></div>
<svg class="ic" style="left:2742px;top:946px;width:40px;height:40px;color:#f5f5f5" viewBox="0 0 24 24" fill="none" stroke="currentColor" stroke-width="1.5" stroke-linecap="round" stroke-linejoin="round"><path d="M15.75 5.25a3 3 0 0 1 3 3m3 0a6 6 0 0 1-7.029 5.912c-.563-.097-1.159.026-1.563.43L10.5 17.25H8.25v2.25H6v2.25H2.25v-2.818c0-.597.237-1.17.659-1.591l6.499-6.499c.404-.404.527-1 .43-1.563A6 6 0 1 1 21.75 8.25Z"/></svg>
<div class="b" style="left:544px;top:1112px;width:2304px;height:2px;background:#1c486c;border-radius:0px;"></div>
<div class="t" style="left:576.00px;top:1061.90px;font-size:28.84px;color:#f5f5f5;transform:scaleX(1.1108);">134</div>
<svg class="ic" style="left:706px;top:1044px;width:32px;height:32px;color:#a3b3c3" viewBox="0 0 24 24" fill="none" stroke="currentColor" stroke-width="1.5" stroke-linecap="round" stroke-linejoin="round"><path d="M13.5 6H5.25A2.25 2.25 0 0 0 3 8.25v10.5A2.25 2.25 0 0 0 5.25 21h10.5A2.25 2.25 0 0 0 18 18.75V10.5m-10.5 6L21 3m0 0h-5.25M21 3v5.25"/></svg>
<div class="t" style="left:745.00px;top:1057.90px;font-size:28.84px;color:#f5f5f5;transform:scaleX(1.0867);">Pattie Christiansen</div>
<div class="b" style="left:1090.0px;top:1040px;width:134.6px;height:48px;background:#009966;border-radius:14px"></div>
<div class="t" style="left:1114.00px;top:1061.90px;font-size:28.84px;color:#f5f5f5;transform:scaleX(1.1030);">Active</div>
<div class="b dots" style="left:1300px;top:1076px;width:352.3px;height:2px"></div>
<div class="t" style="left:1297.50px;top:1061.90px;font-size:28.84px;color:#f5f5f5;transform:scaleX(1.0371);">1301 NW 13TH CT, BOCA…</div>
<div class="b" style="left:1746.5px;top:1062.6px;width:25.6px;height:2.6px;background:#f5f5f5;border-radius:0px;"></div>
<div class="b" style="left:1996.0px;top:1040px;width:123.2px;height:48px;background:#e7000b;border-radius:14px"></div>
<div class="t" style="left:2020.00px;top:1061.90px;font-size:28.84px;color:#f5f5f5;transform:scaleX(1.0901);">Apr 3</div>
<div class="b" style="left:2234.0px;top:1040px;width:141.0px;height:48px;background:#42a5f5;border-radius:14px"></div>
<div class="t" style="left:2258.00px;top:1061.90px;font-size:28.84px;color:#f5f5f5;transform:scaleX(1.0941);">Apr 10</div>
<div class="t" style="left:2477.00px;top:1061.90px;font-size:28.84px;color:#f5f5f5;transform:scaleX(1.1107);">$500.00</div>
<div class="b" style="left:2708px;top:1024px;width:108px;height:80px;background:#0a2946;border-radius:40px;"></div>
<svg class="ic" style="left:2742px;top:1044px;width:40px;height:40px;color:#f5f5f5" viewBox="0 0 24 24" fill="none" stroke="currentColor" stroke-width="1.5" stroke-linecap="round" stroke-linejoin="round"><path d="M15.75 5.25a3 3 0 0 1 3 3m3 0a6 6 0 0 1-7.029 5.912c-.563-.097-1.159.026-1.563.43L10.5 17.25H8.25v2.25H6v2.25H2.25v-2.818c0-.597.237-1.17.659-1.591l6.499-6.499c.404-.404.527-1 .43-1.563A6 6 0 1 1 21.75 8.25Z"/></svg>
<div class="b" style="left:544px;top:1210px;width:2304px;height:2px;background:#1c486c;border-radius:0px;"></div>
<div class="t" style="left:576.00px;top:1159.90px;font-size:28.84px;color:#f5f5f5;transform:scaleX(1.1108);">137</div>
<svg class="ic" style="left:706px;top:1142px;width:32px;height:32px;color:#a3b3c3" viewBox="0 0 24 24" fill="none" stroke="currentColor" stroke-width="1.5" stroke-linecap="round" stroke-linejoin="round"><path d="M13.5 6H5.25A2.25 2.25 0 0 0 3 8.25v10.5A2.25 2.25 0 0 0 5.25 21h10.5A2.25 2.25 0 0 0 18 18.75V10.5m-10.5 6L21 3m0 0h-5.25M21 3v5.25"/></svg>
<div class="t" style="left:745.00px;top:1155.90px;font-size:28.84px;color:#f5f5f5;transform:scaleX(1.0696);">Trenton Considine</div>
<div class="b" style="left:1090.0px;top:1138px;width:134.6px;height:48px;background:#009966;border-radius:14px"></div>
<div class="t" style="left:1114.00px;top:1159.90px;font-size:28.84px;color:#f5f5f5;transform:scaleX(1.1030);">Active</div>
<div class="b dots" style="left:1300px;top:1174px;width:349.8px;height:2px"></div>
<div class="t" style="left:1297.50px;top:1159.90px;font-size:28.84px;color:#f5f5f5;transform:scaleX(1.0408);">3930 NW 105TH AVE, CO…</div>
<div class="b" style="left:1746.5px;top:1160.6px;width:25.6px;height:2.6px;background:#f5f5f5;border-radius:0px;"></div>
<div class="b" style="left:1996.0px;top:1138px;width:123.2px;height:48px;background:#e7000b;border-radius:14px"></div>
<div class="t" style="left:2020.00px;top:1159.90px;font-size:28.84px;color:#f5f5f5;transform:scaleX(1.0901);">Apr 9</div>
<div class="b" style="left:2234.0px;top:1138px;width:141.0px;height:48px;background:#42a5f5;border-radius:14px"></div>
<div class="t" style="left:2258.00px;top:1159.90px;font-size:28.84px;color:#f5f5f5;transform:scaleX(1.0941);">Apr 16</div>
<div class="t" style="left:2477.00px;top:1159.90px;font-size:28.84px;color:#f5f5f5;transform:scaleX(1.1107);">$500.00</div>
<div class="b" style="left:2708px;top:1122px;width:108px;height:80px;background:#0a2946;border-radius:40px;"></div>
<svg class="ic" style="left:2742px;top:1142px;width:40px;height:40px;color:#f5f5f5" viewBox="0 0 24 24" fill="none" stroke="currentColor" stroke-width="1.5" stroke-linecap="round" stroke-linejoin="round"><path d="M15.75 5.25a3 3 0 0 1 3 3m3 0a6 6 0 0 1-7.029 5.912c-.563-.097-1.159.026-1.563.43L10.5 17.25H8.25v2.25H6v2.25H2.25v-2.818c0-.597.237-1.17.659-1.591l6.499-6.499c.404-.404.527-1 .43-1.563A6 6 0 1 1 21.75 8.25Z"/></svg>
<div class="b" style="left:544px;top:1308px;width:2304px;height:2px;background:#1c486c;border-radius:0px;"></div>
<div class="t" style="left:576.00px;top:1257.90px;font-size:28.84px;color:#f5f5f5;transform:scaleX(1.1108);">136</div>
<svg class="ic" style="left:706px;top:1240px;width:32px;height:32px;color:#a3b3c3" viewBox="0 0 24 24" fill="none" stroke="currentColor" stroke-width="1.5" stroke-linecap="round" stroke-linejoin="round"><path d="M13.5 6H5.25A2.25 2.25 0 0 0 3 8.25v10.5A2.25 2.25 0 0 0 5.25 21h10.5A2.25 2.25 0 0 0 18 18.75V10.5m-10.5 6L21 3m0 0h-5.25M21 3v5.25"/></svg>
<div class="t" style="left:745.00px;top:1253.90px;font-size:28.84px;color:#f5f5f5;transform:scaleX(1.0601);">Sincere Crona</div>
<div class="b" style="left:1090.0px;top:1236px;width:134.6px;height:48px;background:#009966;border-radius:14px"></div>
<div class="t" style="left:1114.00px;top:1257.90px;font-size:28.84px;color:#f5f5f5;transform:scaleX(1.1030);">Active</div>
<div class="b dots" style="left:1300px;top:1272px;width:343.8px;height:2px"></div>
<div class="t" style="left:1297.50px;top:1257.90px;font-size:28.84px;color:#f5f5f5;transform:scaleX(1.0412);">14572 100TH LN N, WES…</div>
<div class="b" style="left:1746.5px;top:1258.6px;width:25.6px;height:2.6px;background:#f5f5f5;border-radius:0px;"></div>
<div class="b" style="left:1996.0px;top:1236px;width:123.2px;height:48px;background:#e7000b;border-radius:14px"></div>
<div class="t" style="left:2020.00px;top:1257.90px;font-size:28.84px;color:#f5f5f5;transform:scaleX(1.0901);">Apr 9</div>
<div class="b" style="left:2234.0px;top:1236px;width:141.0px;height:48px;background:#42a5f5;border-radius:14px"></div>
<div class="t" style="left:2258.00px;top:1257.90px;font-size:28.84px;color:#f5f5f5;transform:scaleX(1.0941);">Apr 16</div>
<div class="t" style="left:2477.00px;top:1257.90px;font-size:28.84px;color:#f5f5f5;transform:scaleX(1.1107);">$500.00</div>
<div class="b" style="left:2708px;top:1220px;width:108px;height:80px;background:#0a2946;border-radius:40px;"></div>
<svg class="ic" style="left:2742px;top:1240px;width:40px;height:40px;color:#f5f5f5" viewBox="0 0 24 24" fill="none" stroke="currentColor" stroke-width="1.5" stroke-linecap="round" stroke-linejoin="round"><path d="M15.75 5.25a3 3 0 0 1 3 3m3 0a6 6 0 0 1-7.029 5.912c-.563-.097-1.159.026-1.563.43L10.5 17.25H8.25v2.25H6v2.25H2.25v-2.818c0-.597.237-1.17.659-1.591l6.499-6.499c.404-.404.527-1 .43-1.563A6 6 0 1 1 21.75 8.25Z"/></svg>
<div class="b" style="left:544px;top:1406px;width:2304px;height:2px;background:#1c486c;border-radius:0px;"></div>
<div class="t" style="left:576.00px;top:1355.90px;font-size:28.84px;color:#f5f5f5;transform:scaleX(1.1625);">112</div>
<svg class="ic" style="left:706px;top:1338px;width:32px;height:32px;color:#a3b3c3" viewBox="0 0 24 24" fill="none" stroke="currentColor" stroke-width="1.5" stroke-linecap="round" stroke-linejoin="round"><path d="M13.5 6H5.25A2.25 2.25 0 0 0 3 8.25v10.5A2.25 2.25 0 0 0 5.25 21h10.5A2.25 2.25 0 0 0 18 18.75V10.5m-10.5 6L21 3m0 0h-5.25M21 3v5.25"/></svg>
<div class="t" style="left:745.00px;top:1351.90px;font-size:28.84px;color:#f5f5f5;transform:scaleX(1.0486);">Mossie Boyle DDS</div>
<div class="b" style="left:1090.0px;top:1334px;width:134.6px;height:48px;background:#009966;border-radius:14px"></div>
<div class="t" style="left:1114.00px;top:1355.90px;font-size:28.84px;color:#f5f5f5;transform:scaleX(1.1030);">Active</div>
<div class="b dots" style="left:1300px;top:1370px;width:353.5px;height:2px"></div>
<div class="t" style="left:1297.50px;top:1355.90px;font-size:28.84px;color:#f5f5f5;transform:scaleX(1.0269);">1032 SW 12TH RD, BOCA…</div>
<div class="b" style="left:1746.5px;top:1356.6px;width:25.6px;height:2.6px;background:#f5f5f5;border-radius:0px;"></div>
<div class="b" style="left:1996.0px;top:1334px;width:123.2px;height:48px;background:#e7000b;border-radius:14px"></div>
<div class="t" style="left:2020.00px;top:1355.90px;font-size:28.84px;color:#f5f5f5;transform:scaleX(1.0901);">Apr 9</div>
<div class="b" style="left:2234.0px;top:1334px;width:141.0px;height:48px;background:#42a5f5;border-radius:14px"></div>
<div class="t" style="left:2258.00px;top:1355.90px;font-size:28.84px;color:#f5f5f5;transform:scaleX(1.0941);">Apr 16</div>
<div class="t" style="left:2477.00px;top:1355.90px;font-size:28.84px;color:#f5f5f5;transform:scaleX(1.1107);">$500.00</div>
<div class="b" style="left:2708px;top:1318px;width:108px;height:80px;background:#0a2946;border-radius:40px;"></div>
<svg class="ic" style="left:2742px;top:1338px;width:40px;height:40px;color:#f5f5f5" viewBox="0 0 24 24" fill="none" stroke="currentColor" stroke-width="1.5" stroke-linecap="round" stroke-linejoin="round"><path d="M15.75 5.25a3 3 0 0 1 3 3m3 0a6 6 0 0 1-7.029 5.912c-.563-.097-1.159.026-1.563.43L10.5 17.25H8.25v2.25H6v2.25H2.25v-2.818c0-.597.237-1.17.659-1.591l6.499-6.499c.404-.404.527-1 .43-1.563A6 6 0 1 1 21.75 8.25Z"/></svg>
<div class="b" style="left:544px;top:1504px;width:2304px;height:2px;background:#1c486c;border-radius:0px;"></div>
<div class="t" style="left:576.00px;top:1453.90px;font-size:28.84px;color:#f5f5f5;transform:scaleX(1.1108);">121</div>
<svg class="ic" style="left:706px;top:1436px;width:32px;height:32px;color:#a3b3c3" viewBox="0 0 24 24" fill="none" stroke="currentColor" stroke-width="1.5" stroke-linecap="round" stroke-linejoin="round"><path d="M13.5 6H5.25A2.25 2.25 0 0 0 3 8.25v10.5A2.25 2.25 0 0 0 5.25 21h10.5A2.25 2.25 0 0 0 18 18.75V10.5m-10.5 6L21 3m0 0h-5.25M21 3v5.25"/></svg>
<div class="t" style="left:745.00px;top:1449.90px;font-size:28.84px;color:#f5f5f5;transform:scaleX(1.0520);">Mrs. Asha Ernser DDS</div>
<div class="b" style="left:1090.0px;top:1432px;width:134.6px;height:48px;background:#009966;border-radius:14px"></div>
<div class="t" style="left:1114.00px;top:1453.90px;font-size:28.84px;color:#f5f5f5;transform:scaleX(1.1030);">Active</div>
<div class="b dots" style="left:1300px;top:1468px;width:351.6px;height:2px"></div>
<div class="t" style="left:1297.50px;top:1453.90px;font-size:28.84px;color:#f5f5f5;transform:scaleX(1.0352);">1750 NW 105TH LN, COR…</div>
<div class="b" style="left:1746.5px;top:1454.6px;width:25.6px;height:2.6px;background:#f5f5f5;border-radius:0px;"></div>
<div class="b" style="left:1996.0px;top:1432px;width:123.2px;height:48px;background:#e7000b;border-radius:14px"></div>
<div class="t" style="left:2020.00px;top:1453.90px;font-size:28.84px;color:#f5f5f5;transform:scaleX(1.0901);">Apr 9</div>
<div class="b" style="left:2234.0px;top:1432px;width:141.0px;height:48px;background:#42a5f5;border-radius:14px"></div>
<div class="t" style="left:2258.00px;top:1453.90px;font-size:28.84px;color:#f5f5f5;transform:scaleX(1.0941);">Apr 16</div>
<div class="t" style="left:2477.00px;top:1453.90px;font-size:28.84px;color:#f5f5f5;transform:scaleX(1.1107);">$500.00</div>
<div class="b" style="left:2708px;top:1416px;width:108px;height:80px;background:#0a2946;border-radius:40px;"></div>
<svg class="ic" style="left:2742px;top:1436px;width:40px;height:40px;color:#f5f5f5" viewBox="0 0 24 24" fill="none" stroke="currentColor" stroke-width="1.5" stroke-linecap="round" stroke-linejoin="round"><path d="M15.75 5.25a3 3 0 0 1 3 3m3 0a6 6 0 0 1-7.029 5.912c-.563-.097-1.159.026-1.563.43L10.5 17.25H8.25v2.25H6v2.25H2.25v-2.818c0-.597.237-1.17.659-1.591l6.499-6.499c.404-.404.527-1 .43-1.563A6 6 0 1 1 21.75 8.25Z"/></svg>
<div class="b" style="left:544px;top:1602px;width:2304px;height:2px;background:#1c486c;border-radius:0px;"></div>
<div class="t" style="left:576.00px;top:1551.90px;font-size:28.84px;color:#f5f5f5;transform:scaleX(1.1625);">115</div>
<svg class="ic" style="left:706px;top:1534px;width:32px;height:32px;color:#a3b3c3" viewBox="0 0 24 24" fill="none" stroke="currentColor" stroke-width="1.5" stroke-linecap="round" stroke-linejoin="round"><path d="M13.5 6H5.25A2.25 2.25 0 0 0 3 8.25v10.5A2.25 2.25 0 0 0 5.25 21h10.5A2.25 2.25 0 0 0 18 18.75V10.5m-10.5 6L21 3m0 0h-5.25M21 3v5.25"/></svg>
<div class="t" style="left:745.00px;top:1547.90px;font-size:28.84px;color:#f5f5f5;transform:scaleX(1.0551);">Ms. Kaycee Hintz D…</div>
<div class="b" style="left:1090.0px;top:1530px;width:134.6px;height:48px;background:#009966;border-radius:14px"></div>
<div class="t" style="left:1114.00px;top:1551.90px;font-size:28.84px;color:#f5f5f5;transform:scaleX(1.1030);">Active</div>
<div class="b dots" style="left:1300px;top:1566px;width:339.5px;height:2px"></div>
<div class="t" style="left:1297.50px;top:1551.90px;font-size:28.84px;color:#f5f5f5;transform:scaleX(1.0384);">3955 NW 103RD DR, CO…</div>
<div class="b" style="left:1746.5px;top:1552.6px;width:25.6px;height:2.6px;background:#f5f5f5;border-radius:0px;"></div>
<div class="b" style="left:1996.0px;top:1530px;width:123.2px;height:48px;background:#e7000b;border-radius:14px"></div>
<div class="t" style="left:2020.00px;top:1551.90px;font-size:28.84px;color:#f5f5f5;transform:scaleX(1.0901);">Apr 9</div>
<div class="b" style="left:2234.0px;top:1530px;width:141.0px;height:48px;background:#42a5f5;border-radius:14px"></div>
<div class="t" style="left:2258.00px;top:1551.90px;font-size:28.84px;color:#f5f5f5;transform:scaleX(1.0941);">Apr 16</div>
<div class="t" style="left:2477.00px;top:1551.90px;font-size:28.84px;color:#f5f5f5;transform:scaleX(1.1107);">$500.00</div>
<div class="b" style="left:2708px;top:1514px;width:108px;height:80px;background:#0a2946;border-radius:40px;"></div>
<svg class="ic" style="left:2742px;top:1534px;width:40px;height:40px;color:#f5f5f5" viewBox="0 0 24 24" fill="none" stroke="currentColor" stroke-width="1.5" stroke-linecap="round" stroke-linejoin="round"><path d="M15.75 5.25a3 3 0 0 1 3 3m3 0a6 6 0 0 1-7.029 5.912c-.563-.097-1.159.026-1.563.43L10.5 17.25H8.25v2.25H6v2.25H2.25v-2.818c0-.597.237-1.17.659-1.591l6.499-6.499c.404-.404.527-1 .43-1.563A6 6 0 1 1 21.75 8.25Z"/></svg>
<div class="b" style="left:544px;top:1700px;width:2304px;height:2px;background:#1c486c;border-radius:0px;"></div>
<div class="t" style="left:576.00px;top:1649.90px;font-size:28.84px;color:#f5f5f5;transform:scaleX(1.1108);">131</div>
<svg class="ic" style="left:706px;top:1632px;width:32px;height:32px;color:#a3b3c3" viewBox="0 0 24 24" fill="none" stroke="currentColor" stroke-width="1.5" stroke-linecap="round" stroke-linejoin="round"><path d="M13.5 6H5.25A2.25 2.25 0 0 0 3 8.25v10.5A2.25 2.25 0 0 0 5.25 21h10.5A2.25 2.25 0 0 0 18 18.75V10.5m-10.5 6L21 3m0 0h-5.25M21 3v5.25"/></svg>
<div class="t" style="left:745.00px;top:1645.90px;font-size:28.84px;color:#f5f5f5;transform:scaleX(1.0573);">Misael Farrell</div>
<div class="b" style="left:1090.0px;top:1628px;width:134.6px;height:48px;background:#009966;border-radius:14px"></div>
<div class="t" style="left:1114.00px;top:1649.90px;font-size:28.84px;color:#f5f5f5;transform:scaleX(1.1030);">Active</div>
<div class="b dots" style="left:1300px;top:1664px;width:344.9px;height:2px"></div>
<div class="t" style="left:1297.50px;top:1649.90px;font-size:28.84px;color:#f5f5f5;transform:scaleX(1.0290);">1001 10TH WAY, WEST P…</div>
<div class="b" style="left:1746.5px;top:1650.6px;width:25.6px;height:2.6px;background:#f5f5f5;border-radius:0px;"></div>
<div class="b" style="left:1996.0px;top:1628px;width:123.2px;height:48px;background:#e7000b;border-radius:14px"></div>
<div class="t" style="left:2020.00px;top:1649.90px;font-size:28.84px;color:#f5f5f5;transform:scaleX(1.0901);">Apr 9</div>
<div class="b" style="left:2234.0px;top:1628px;width:141.0px;height:48px;background:#42a5f5;border-radius:14px"></div>
<div class="t" style="left:2258.00px;top:1649.90px;font-size:28.84px;color:#f5f5f5;transform:scaleX(1.0941);">Apr 16</div>
<div class="t" style="left:2477.00px;top:1649.90px;font-size:28.84px;color:#f5f5f5;transform:scaleX(1.1107);">$500.00</div>
<div class="b" style="left:2708px;top:1612px;width:108px;height:80px;background:#0a2946;border-radius:40px;"></div>
<svg class="ic" style="left:2742px;top:1632px;width:40px;height:40px;color:#f5f5f5" viewBox="0 0 24 24" fill="none" stroke="currentColor" stroke-width="1.5" stroke-linecap="round" stroke-linejoin="round"><path d="M15.75 5.25a3 3 0 0 1 3 3m3 0a6 6 0 0 1-7.029 5.912c-.563-.097-1.159.026-1.563.43L10.5 17.25H8.25v2.25H6v2.25H2.25v-2.818c0-.597.237-1.17.659-1.591l6.499-6.499c.404-.404.527-1 .43-1.563A6 6 0 1 1 21.75 8.25Z"/></svg>
<div class="b" style="left:544px;top:1798px;width:2304px;height:2px;background:#1c486c;border-radius:0px;"></div>
<div class="t" style="left:576.00px;top:1747.90px;font-size:28.84px;color:#f5f5f5;transform:scaleX(1.1108);">130</div>
<svg class="ic" style="left:706px;top:1730px;width:32px;height:32px;color:#a3b3c3" viewBox="0 0 24 24" fill="none" stroke="currentColor" stroke-width="1.5" stroke-linecap="round" stroke-linejoin="round"><path d="M13.5 6H5.25A2.25 2.25 0 0 0 3 8.25v10.5A2.25 2.25 0 0 0 5.25 21h10.5A2.25 2.25 0 0 0 18 18.75V10.5m-10.5 6L21 3m0 0h-5.25M21 3v5.25"/></svg>
<div class="t" style="left:745.00px;top:1743.90px;font-size:28.84px;color:#f5f5f5;transform:scaleX(1.0456);">Josiane Gaylord</div>
<div class="b" style="left:1090.0px;top:1726px;width:134.6px;height:48px;background:#009966;border-radius:14px"></div>
<div class="t" style="left:1114.00px;top:1747.90px;font-size:28.84px;color:#f5f5f5;transform:scaleX(1.1030);">Active</div>
<div class="b dots" style="left:1300px;top:1762px;width:349.8px;height:2px"></div>
<div class="t" style="left:1297.50px;top:1747.90px;font-size:28.84px;color:#f5f5f5;transform:scaleX(1.0408);">3912 NW 105TH AVE, CO…</div>
<div class="b" style="left:1746.5px;top:1748.6px;width:25.6px;height:2.6px;background:#f5f5f5;border-radius:0px;"></div>
<div class="b" style="left:1996.0px;top:1726px;width:123.2px;height:48px;background:#e7000b;border-radius:14px"></div>
<div class="t" style="left:2020.00px;top:1747.90px;font-size:28.84px;color:#f5f5f5;transform:scaleX(1.0901);">Apr 9</div>
<div class="b" style="left:2234.0px;top:1726px;width:141.0px;height:48px;background:#42a5f5;border-radius:14px"></div>
<div class="t" style="left:2258.00px;top:1747.90px;font-size:28.84px;color:#f5f5f5;transform:scaleX(1.0941);">Apr 16</div>
<div class="t" style="left:2477.00px;top:1747.90px;font-size:28.84px;color:#f5f5f5;transform:scaleX(1.1107);">$500.00</div>
<div class="b" style="left:2708px;top:1710px;width:108px;height:80px;background:#0a2946;border-radius:40px;"></div>
<svg class="ic" style="left:2742px;top:1730px;width:40px;height:40px;color:#f5f5f5" viewBox="0 0 24 24" fill="none" stroke="currentColor" stroke-width="1.5" stroke-linecap="round" stroke-linejoin="round"><path d="M15.75 5.25a3 3 0 0 1 3 3m3 0a6 6 0 0 1-7.029 5.912c-.563-.097-1.159.026-1.563.43L10.5 17.25H8.25v2.25H6v2.25H2.25v-2.818c0-.597.237-1.17.659-1.591l6.499-6.499c.404-.404.527-1 .43-1.563A6 6 0 1 1 21.75 8.25Z"/></svg></body></html>
